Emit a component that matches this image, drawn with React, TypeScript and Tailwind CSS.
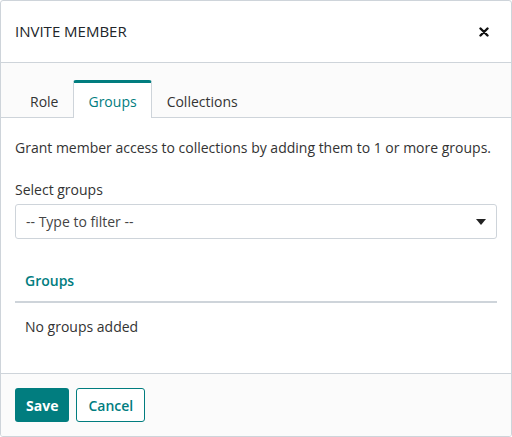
export default function App() {
  return (
    <div className="h-[437px] w-[512px] bg-white p-0" style={{ fontFamily: '"Open Sans", sans-serif' }}>
      <div className="flex h-full flex-col overflow-hidden rounded-[3px] border border-[#ced4da] text-[14px] text-[#212529]">
        <div className="flex h-[62px] shrink-0 items-center justify-between border-b border-[#ced4da] pl-[14px] pr-[22px]">
          <h1 className="text-[15px] font-normal">INVITE MEMBER</h1>
          <svg width="10" height="10" viewBox="0 0 10 10">
            <path d="M1.5 1.5L8.5 8.5M8.5 1.5L1.5 8.5" stroke="#111" strokeWidth="2.4" strokeLinecap="round" />
          </svg>
        </div>
        <div className="flex h-[55px] shrink-0 items-end bg-[#fbfbfb] px-[14px] border-b border-[#ced4da]">
          <div className="px-[15px] pb-[5px] text-[#333]">Role</div>
          <div className="-mb-px rounded-t-[3px] border-x border-t-[3px] border-x-[#ced4da] border-t-[#017d7f] bg-white px-[14px] pt-[8px] pb-[6px] text-[#017d7f]">Groups</div>
          <div className="px-[15px] pb-[5px] text-[#333]">Collections</div>
        </div>
        <div className="flex-1 bg-white px-[14px] pt-[19px]">
          <p className="text-[#333]">Grant member access to collections by adding them to 1 or more groups.</p>
          <label className="mt-[21px] block text-[#333]">Select groups</label>
          <div className="mt-[4px] flex h-[35px] items-center justify-between rounded-[3px] border border-[#ced4da] px-[10px] text-[#444]">
            <span>-- Type to filter --</span>
            <svg width="10" height="6" viewBox="0 0 10 6"><path d="M0 0h10L5 6z" fill="#222" /></svg>
          </div>
          <div className="mt-[31px] border-b-2 border-[#ced4da] px-[10px] pb-[10px] font-semibold text-[#017d7f]">Groups</div>
          <div className="px-[10px] pt-[13px] text-[#333]">No groups added</div>
        </div>
        <div className="flex h-[63px] shrink-0 items-center gap-[7px] border-t border-[#ced4da] bg-[#fbfbfb] px-[14px]">
          <button className="h-[34px] rounded-[3px] bg-[#017d7f] px-[11px] font-bold text-white">Save</button>
          <button className="h-[34px] rounded-[3px] border border-[#017d7f] bg-white px-[11px] font-semibold text-[#017d7f]">Cancel</button>
        </div>
      </div>
    </div>
  );
}
